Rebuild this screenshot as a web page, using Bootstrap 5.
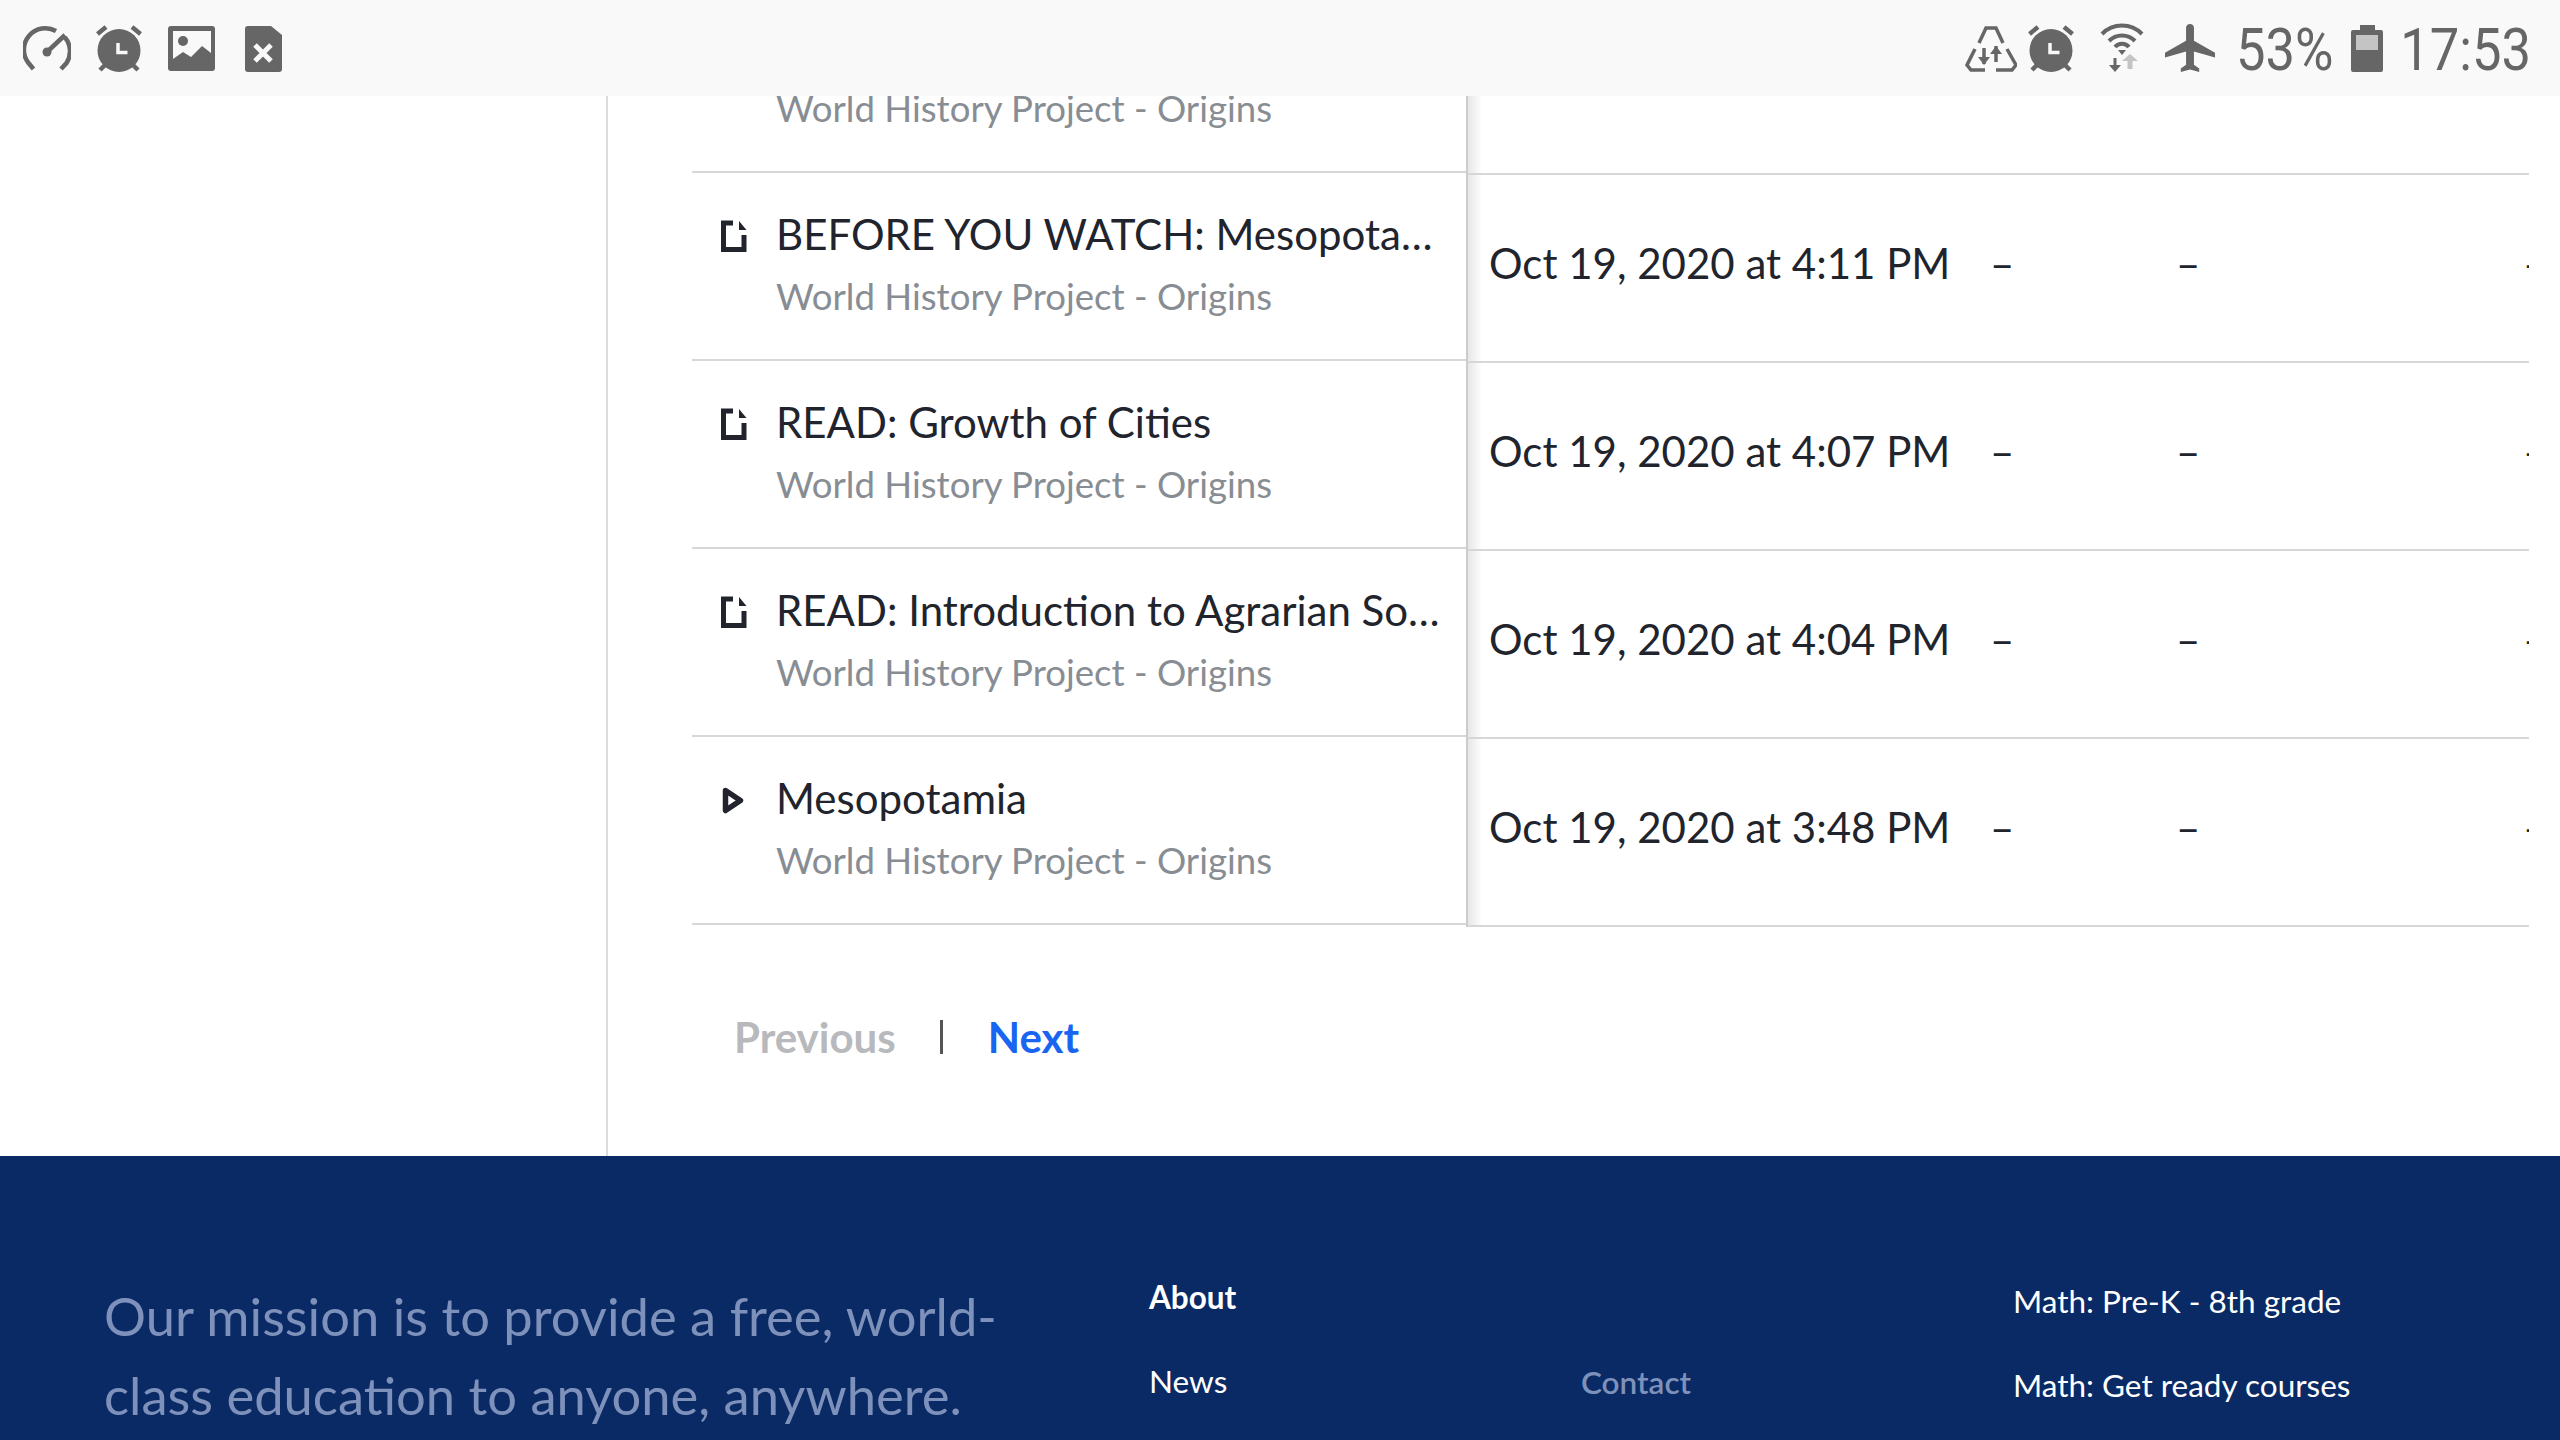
<!DOCTYPE html>
<html lang="en">
<head>
    <meta charset="UTF-8">
    <meta name="viewport" content="width=device-width, initial-scale=1.0">
    <title>Activity log</title>
    <link href="https://cdn.jsdelivr.net/npm/bootstrap@5.3.0/dist/css/bootstrap.min.css" rel="stylesheet">
    <style>
        html, body { height: 100%; }
        body { font-family: Lato, "Liberation Sans", sans-serif; color: #21242c; overflow: hidden; background: #fff; }
        .status-bar { height: 96px; background: #f9f9f9; color: #666; position: relative; z-index: 2; padding: 0 29px 0 23px; }
        .status-left { gap: 24px; }
        .sim-icon { margin-left: 5px; }
        .status-text { font-family: Roboto, "Liberation Sans", sans-serif; font-size: 59px; line-height: 96px; transform: translateY(2px) scaleX(.89); transform-origin: right center; display: inline-block; }
        .gap-alarm { margin-left: 10px; }
        .gap-wifi { margin-left: 25px; }
        .gap-plane { margin-left: 21px; }
        .gap-pct { margin-left: 9px; }
        .gap-batt { margin-left: 18px; }
        .gap-time { margin-left: 1px; }
        .page-body { height: 1060px; }
        .side-col { width: 608px; border-right: 2px solid #dcdcdc; }
        .main-col { padding-left: 84px; }
        .tbl-wrap { width: 1837px; }
        .left-tbl { width: 774px; }
        .right-tbl { width: 1063px; border-left: 2px solid #ccc; background: linear-gradient(90deg, #e6e6e6, #fff 14px) no-repeat; overflow: hidden; }
        .left-row { height: 188px; border-bottom: 2px solid #d6d7d8; padding-left: 84px; position: relative; }
        .left-row.cut { height: 77px; overflow: hidden; padding-bottom: 39px; }
        .row-icon { position: absolute; left: 29px; top: 47px; }
        .row-icon.play-icon { left: 30px; top: 50px; }
        .item-title { font-size: 42px; line-height: 48px; width: 665px; padding-top: 37px; }
        .item-sub { font-size: 36.6px; line-height: 48px; color: #888d93; margin-top: 14px; }
        .left-row.cut .item-sub { margin-top: 0; }
        .right-row { height: 188px; border-bottom: 2px solid #d6d7d8; display: grid; grid-template-columns: 522px 186px 347px auto; align-items: center; font-size: 42px; padding-bottom: 10px; }
        .right-row.cut { height: 79px; align-items: start; padding-bottom: 0; overflow: hidden; }
        .right-row.cut .date-cell { margin-top: -53px; }
        .right-row .date-cell { padding-left: 21px; white-space: nowrap; }
        .pager { padding: 86px 0 0 42px; font-size: 42px; line-height: 48px; font-weight: 700; }
        .pager-prev { color: #b8b9bc; }
        .pager-sep { width: 3px; height: 34px; background: #555; margin: 0 45px 0 44px; }
        .pager-next { color: #1865f2; text-decoration: none; }
        .site-footer { height: 284px; background: #0a2a66; overflow: hidden; }
        .mission { width: 1149px; padding: 121px 0 0 104px; font-size: 52.5px; line-height: 78.75px; color: #7e91ba; }
        .mission p { width: 920px; }
        .foot-col { width: 432px; font-size: 31.5px; line-height: 40px; color: #fff; padding-top: 121px; }
        .foot-col a { color: inherit; text-decoration: none; }
        .foot-col li { height: 84px; }
        .foot-head { font-weight: 700; }
        .foot-muted { color: #7e91ba; padding-top: 206px; font-weight: 600; }
        .foot-math { padding-top: 125px; width: auto; }
    </style>
</head>
<body>
    <svg width="0" height="0" class="position-absolute">
        <symbol id="ic-alarm" viewBox="0 0 48 48">
            <circle cx="24" cy="26.5" r="21.5" fill="#666"/>
            <path d="M2.500 10L11 3M45.500 10L37 3M5 46l5-5M43 46l-5-5" stroke="#666" stroke-width="4.500" fill="none"/>
            <path d="M23 19v9.500h9.500" stroke="#f9f9f9" stroke-width="3.500" fill="none"/>
        </symbol>
        <symbol id="ic-doc" viewBox="0 0 26 32">
            <path d="M12 3H2.500V29.500H23V15" fill="none" stroke="#21242c" stroke-width="5"/>
            <path d="M18 1L25.500 10H18z" fill="#21242c"/>
        </symbol>
        <symbol id="ic-play" viewBox="0 0 22 27">
            <path d="M3.500 3.500L18.500 13.500L3.500 23.500z" fill="none" stroke="#21242c" stroke-width="5.500" stroke-linejoin="round"/>
        </symbol>
    </svg>

    <div class="status-bar d-flex align-items-center justify-content-between">
        <div class="status-left d-flex align-items-center">
            <svg width="48" height="48" viewBox="0 0 48 48" fill="none" stroke="#666" stroke-width="4.500">
                <path d="M10.500 45L5.500 39A21.500 21.500 0 0 1 33 7"/>
                <path d="M42 13.500A21.500 21.500 0 0 1 43.500 39L38 45"/>
                <path d="M24 28L42 11"/>
                <circle cx="24" cy="28" r="4.500" fill="#666" stroke="none"/>
            </svg>
            <svg width="48" height="48"><use href="#ic-alarm"/></svg>
            <svg width="48" height="48" viewBox="0 0 48 48">
                <rect x="1" y="2" width="47" height="45" rx="3" fill="#666"/>
                <rect x="6" y="7" width="38" height="28" fill="#f9f9f9"/>
                <path d="M6 35L16 28L24 33L35 22L44 29V40H6z" fill="#666"/>
                <circle cx="16" cy="17" r="5" fill="#666"/>
            </svg>
            <svg class="sim-icon" width="48" height="48" viewBox="0 0 48 48">
                <path d="M1 5Q1 2 4 2H27L38 11V45Q38 48 35 48H4Q1 48 1 45z" fill="#666"/>
                <path d="M11 21L27 37M27 21L11 37" stroke="#f9f9f9" stroke-width="5"/>
            </svg>
        </div>
        <div class="d-flex align-items-center">
            <svg width="52" height="48" viewBox="0 0 52 48" fill="none" stroke="#666" stroke-width="3.500">
                <path d="M14 19L21 4H31L38 19M10 25L2 41L6 46H20M42 25L51 41L47 46H31"/>
                <path d="M19 24V40M31 38V22" stroke-width="3.500"/>
                <path d="M13 33L19 41L25 33zM25 30L31 22L37 30z" fill="#666" stroke="none"/>
            </svg>
            <svg width="48" height="48" class="gap-alarm"><use href="#ic-alarm"/></svg>
            <svg width="44" height="50" viewBox="0 0 44 50" class="gap-wifi" fill="none" stroke="#666" stroke-width="4">
                <path d="M2 11A28 28 0 0 1 42 11M9 18A18 18 0 0 1 35 18M15 24A9 9 0 0 1 29 24"/>
                <path d="M18 27L22 32L26 27z" fill="#666" stroke="none"/>
                <path d="M15 35V46" stroke-width="3"/>
                <path d="M9 42L15 49L21 42z" fill="#666" stroke="none"/>
                <path d="M30 36V46" stroke="#c4c4c4" stroke-width="5"/>
                <path d="M22 38L30 31L38 38z" fill="#c4c4c4" stroke="none"/>
            </svg>
            <svg width="50" height="48" viewBox="2 2 19 20" preserveAspectRatio="none" class="gap-plane" fill="#666">
                <path d="M21 16v-2l-8-5V3.500c0-.83-.67-1.500-1.500-1.500S10 2.670 10 3.500V9l-8 5v2l8-2.500V19l-2 1.500V22l3.500-1 3.500 1v-1.500L13 19v-5.500l8 2.500z"/>
            </svg>
            <span class="status-text gap-pct">53%</span>
            <svg width="32" height="48" viewBox="0 0 32 48" class="gap-batt">
                <path d="M9 1H24V6H30Q32 6 32 8V46Q32 48 30 48H2Q0 48 0 46V8Q0 6 2 6H9z" fill="#666"/>
                <rect x="5" y="11" width="22" height="15" fill="#c4c4c4"/>
            </svg>
            <span class="status-text gap-time">17:53</span>
        </div>
    </div>

    <div class="page-body d-flex">
        <div class="side-col flex-shrink-0"></div>
        <div class="main-col flex-grow-1">
            <div class="tbl-wrap d-flex">
                <div class="left-tbl flex-shrink-0">
                    <div class="left-row cut d-flex align-items-end">
                        <div class="item-sub">World History Project - Origins</div>
                    </div>
                    <div class="left-row">
                        <svg class="row-icon" width="26" height="32"><use href="#ic-doc"/></svg>
                        <div class="item-title text-truncate">BEFORE YOU WATCH: Mesopotamia</div>
                        <div class="item-sub">World History Project - Origins</div>
                    </div>
                    <div class="left-row">
                        <svg class="row-icon" width="26" height="32"><use href="#ic-doc"/></svg>
                        <div class="item-title text-truncate">READ: Growth of Cities</div>
                        <div class="item-sub">World History Project - Origins</div>
                    </div>
                    <div class="left-row">
                        <svg class="row-icon" width="26" height="32"><use href="#ic-doc"/></svg>
                        <div class="item-title text-truncate">READ: Introduction to Agrarian Societies</div>
                        <div class="item-sub">World History Project - Origins</div>
                    </div>
                    <div class="left-row">
                        <svg class="row-icon play-icon" width="22" height="27"><use href="#ic-play"/></svg>
                        <div class="item-title text-truncate">Mesopotamia</div>
                        <div class="item-sub">World History Project - Origins</div>
                    </div>
                </div>
                <div class="right-tbl flex-shrink-0">
                    <div class="right-row cut"><div class="date-cell">Oct 19, 2020 at 4:20 PM</div></div>
                    <div class="right-row"><div class="date-cell">Oct 19, 2020 at 4:11 PM</div><div>–</div><div>–</div><div>–</div></div>
                    <div class="right-row"><div class="date-cell">Oct 19, 2020 at 4:07 PM</div><div>–</div><div>–</div><div>–</div></div>
                    <div class="right-row"><div class="date-cell">Oct 19, 2020 at 4:04 PM</div><div>–</div><div>–</div><div>–</div></div>
                    <div class="right-row"><div class="date-cell">Oct 19, 2020 at 3:48 PM</div><div>–</div><div>–</div><div>–</div></div>
                </div>
            </div>
            <div class="pager d-flex align-items-center">
                <span class="pager-prev">Previous</span>
                <span class="pager-sep"></span>
                <a href="#" class="pager-next">Next</a>
            </div>
        </div>
    </div>

    <footer class="site-footer d-flex">
        <div class="mission flex-shrink-0"><p class="m-0">Our mission is to provide a free, world-class education to anyone, anywhere.</p></div>
        <ul class="foot-col list-unstyled m-0 flex-shrink-0">
            <li class="foot-head">About</li>
            <li><a href="#">News</a></li>
        </ul>
        <ul class="foot-col foot-muted list-unstyled m-0 flex-shrink-0">
            <li><a href="#">Contact</a></li>
        </ul>
        <ul class="foot-col foot-math list-unstyled m-0">
            <li><a href="#">Math: Pre-K - 8th grade</a></li>
            <li><a href="#">Math: Get ready courses</a></li>
        </ul>
    </footer>

    <script src="https://cdn.jsdelivr.net/npm/bootstrap@5.3.0/dist/js/bootstrap.bundle.min.js"></script>
</body>
</html>
